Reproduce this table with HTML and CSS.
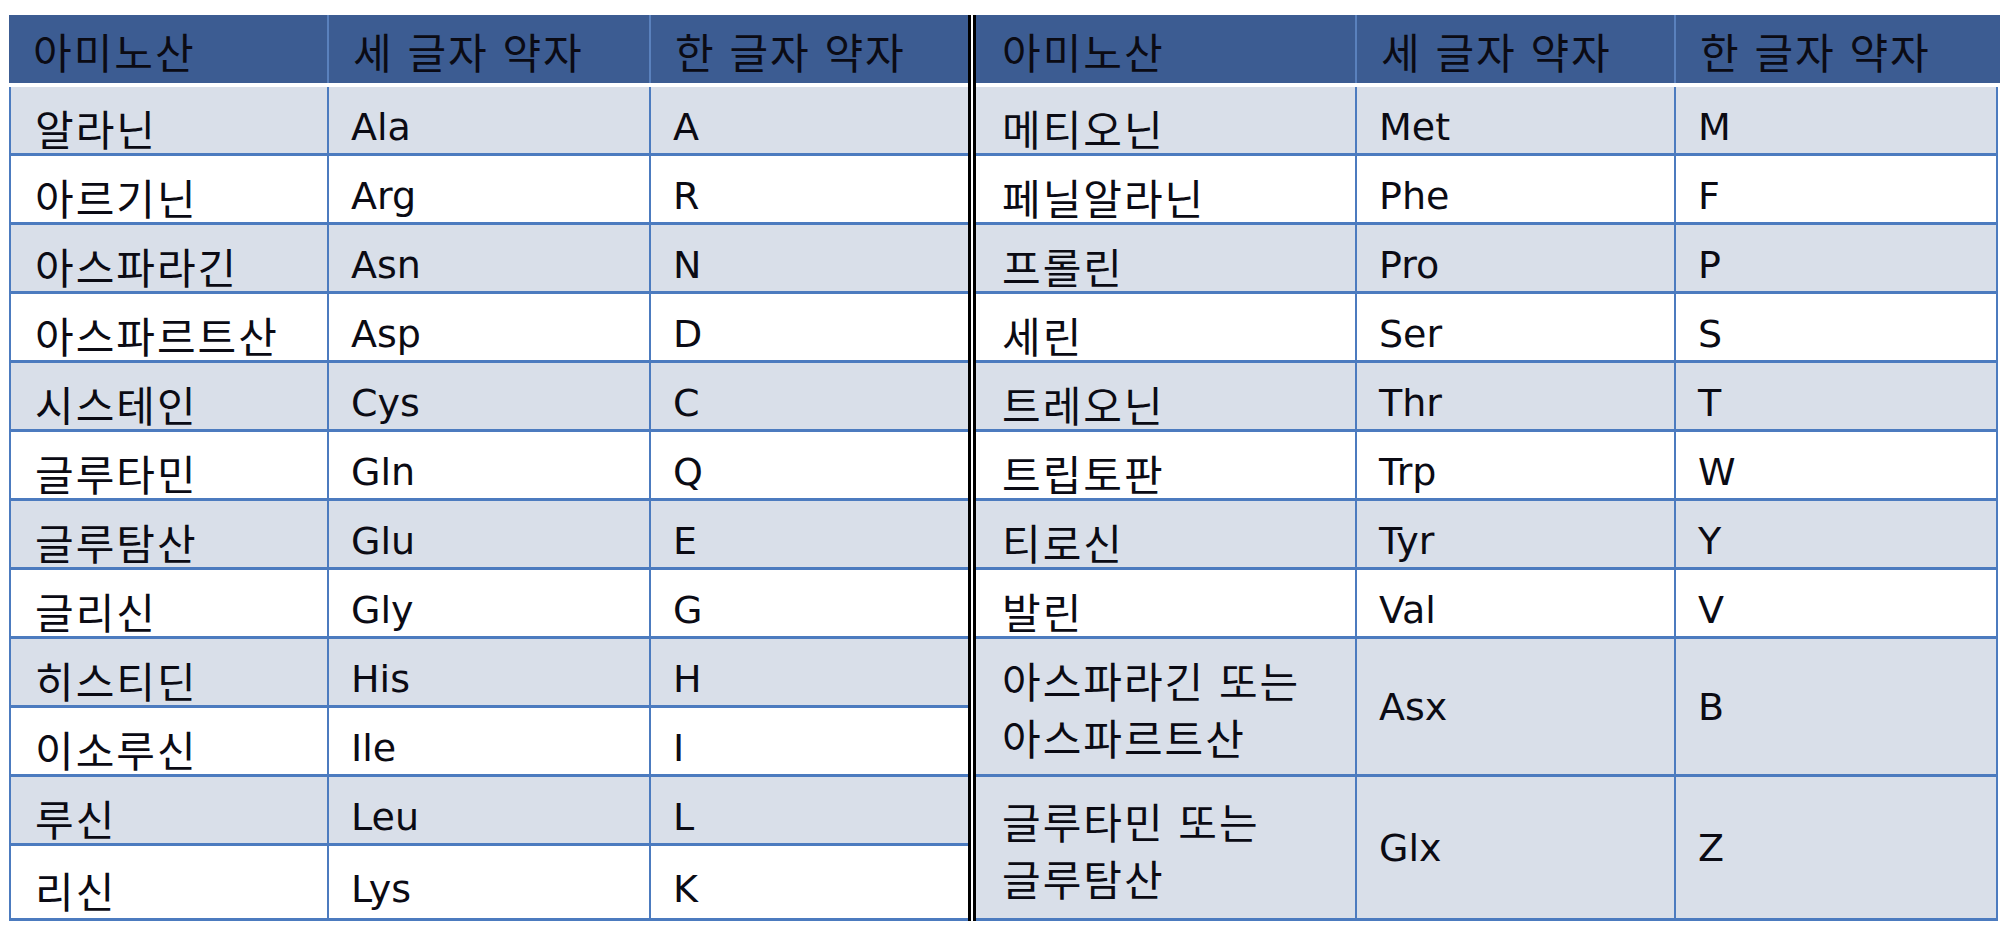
FILE: index.html
```html
<!DOCTYPE html>
<html lang="ko">
<head>
<meta charset="utf-8">
<title>아미노산 약자</title>
<link rel="stylesheet" href="styles.css">
</head>
<body>
<div class="page">
  <section class="side left">
    <div class="head">
      <div class="h">아미노산</div>
      <div class="h">세 글자 약자</div>
      <div class="h">한 글자 약자</div>
    </div>
    <div class="grid">
      <div class="row alt"><div class="c ko">알라닌</div><div class="c en">Ala</div><div class="c en">A</div></div>
      <div class="row"><div class="c ko">아르기닌</div><div class="c en">Arg</div><div class="c en">R</div></div>
      <div class="row alt"><div class="c ko">아스파라긴</div><div class="c en">Asn</div><div class="c en">N</div></div>
      <div class="row"><div class="c ko">아스파르트산</div><div class="c en">Asp</div><div class="c en">D</div></div>
      <div class="row alt"><div class="c ko">시스테인</div><div class="c en">Cys</div><div class="c en">C</div></div>
      <div class="row"><div class="c ko">글루타민</div><div class="c en">Gln</div><div class="c en">Q</div></div>
      <div class="row alt"><div class="c ko">글루탐산</div><div class="c en">Glu</div><div class="c en">E</div></div>
      <div class="row"><div class="c ko">글리신</div><div class="c en">Gly</div><div class="c en">G</div></div>
      <div class="row alt"><div class="c ko">히스티딘</div><div class="c en">His</div><div class="c en">H</div></div>
      <div class="row"><div class="c ko">이소루신</div><div class="c en">Ile</div><div class="c en">I</div></div>
      <div class="row alt"><div class="c ko">루신</div><div class="c en">Leu</div><div class="c en">L</div></div>
      <div class="row"><div class="c ko">리신</div><div class="c en">Lys</div><div class="c en">K</div></div>
    </div>
  </section>
  <div class="sep"></div>
  <section class="side right">
    <div class="head">
      <div class="h">아미노산</div>
      <div class="h">세 글자 약자</div>
      <div class="h">한 글자 약자</div>
    </div>
    <div class="grid">
      <div class="row alt"><div class="c ko">메티오닌</div><div class="c en">Met</div><div class="c en">M</div></div>
      <div class="row"><div class="c ko">페닐알라닌</div><div class="c en">Phe</div><div class="c en">F</div></div>
      <div class="row alt"><div class="c ko">프롤린</div><div class="c en">Pro</div><div class="c en">P</div></div>
      <div class="row"><div class="c ko">세린</div><div class="c en">Ser</div><div class="c en">S</div></div>
      <div class="row alt"><div class="c ko">트레오닌</div><div class="c en">Thr</div><div class="c en">T</div></div>
      <div class="row"><div class="c ko">트립토판</div><div class="c en">Trp</div><div class="c en">W</div></div>
      <div class="row alt"><div class="c ko">티로신</div><div class="c en">Tyr</div><div class="c en">Y</div></div>
      <div class="row"><div class="c ko">발린</div><div class="c en">Val</div><div class="c en">V</div></div>
      <div class="row alt tall"><div class="c ko">아스파라긴 또는<br>아스파르트산</div><div class="c en">Asx</div><div class="c en">B</div></div>
      <div class="row alt tall"><div class="c ko">글루타민 또는<br>글루탐산</div><div class="c en">Glx</div><div class="c en">Z</div></div>
    </div>
  </section>
</div>
</body>
</html>
```

FILE: styles.css
```css
html, body {
  margin: 0;
  padding: 0;
  background: #ffffff;
  overflow: hidden;
}

.page {
  display: flex;
  align-items: flex-start;
  padding: 15px 0 0 9px;
  width: 2000px;
  box-sizing: border-box;
  color: #0b0b14;
}

.side {
  display: flex;
  flex-direction: column;
  gap: 4px;
  flex: none;
}

.left { width: 959px; }
.right { width: 1024px; }

.head {
  display: grid;
  height: 68px;
  background: #3c5c92;
}

.left .head {
  grid-template-columns: 320px 322px 317px;
}

.right .head {
  grid-template-columns: 381px 319px 324px;
}

.h {
  display: flex;
  align-items: center;
  padding: 2px 0 0 24px;
  border-right: 2px solid #5a81bd;
  font-family: "Noto Sans CJK KR", "Noto Sans", sans-serif;
  font-size: 42px;
  letter-spacing: 2px;
  line-height: 57px;
  white-space: nowrap;
  box-sizing: border-box;
}

.h:last-child { border-right: none; }
.right .h:first-child { padding-left: 26px; }

.grid {
  display: grid;
  grid-template-rows: repeat(11, 69px) 75px;
}

.left .grid {
  grid-template-columns: 318px 322px 317px;
  border-left: 2px solid #4c7bbf;
}

.right .grid {
  grid-template-columns: 381px 319px 322px;
}

.row { display: contents; }
.row.tall > .c { grid-row: span 2; }

.c {
  display: flex;
  align-items: center;
  padding: 14px 0 0 22px;
  background: #ffffff;
  border-bottom: 3px solid #4c7bbf;
  border-right: 2px solid #4c7bbf;
  box-sizing: border-box;
  line-height: 57px;
  white-space: nowrap;
}

.row.alt > .c { background: #d9dfe9; }
.row.tall > .c { padding-top: 2px; }

.left .c:nth-child(3) { border-right: none; }
.c.ko { padding-left: 24px; }
.right .c.ko { padding-left: 26px; }

.ko {
  font-family: "Noto Sans CJK KR", "Noto Sans", sans-serif;
  font-size: 42px;
  letter-spacing: 2px;
}

.en {
  font-family: "DejaVu Sans", "Noto Sans", sans-serif;
  font-size: 38px;
}

.sep {
  flex: none;
  width: 2px;
  height: 906px;
  border-left: 3px solid #000000;
  border-right: 3px solid #000000;
  background: #ffffff;
}
```
